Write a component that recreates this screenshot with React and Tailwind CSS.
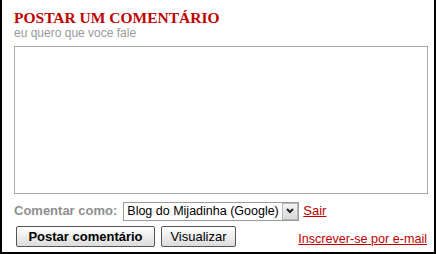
export default function App() {
  return (
    <div className="w-[436px] h-[254px] bg-white border-l-2 border-r-2 border-b-2 border-black pl-3 pr-[6px] pt-[9px] font-['Liberation_Sans',Arial,sans-serif]">
      <h3 className="font-['Liberation_Serif','Times_New_Roman',serif] font-bold text-[15.5px] leading-[17px] text-[#c00000]">
        POSTAR UM COMENTÁRIO
      </h3>
      <p className="text-[12px] leading-[14px] text-[#999999]">eu quero que voce fale</p>
      <textarea className="mt-[6px] block w-[414px] h-[148px] border border-[#a9a9a9] resize-none outline-none" />
      <div className="mt-[7px] flex items-center h-[20px]">
        <span className="text-[13px] text-[#8f8f8f] font-bold mr-[6px]">Comentar como:</span>
        <div className="flex items-center h-[19px] border border-[#9a9a9a] bg-white">
          <span className="pl-[3px] pr-[2px] text-[12.5px] text-black whitespace-nowrap w-[158px]">Blog do Mijadinha (Google)</span>
          <span className="w-[16px] h-[17px] border border-[#b8b8b8] bg-gradient-to-b from-[#f4f4f4] to-[#d8d8d8] flex items-center justify-center">
            <svg width="8" height="6" viewBox="0 0 8 6">
              <path d="M1 1 L4 4 L7 1" stroke="#222" strokeWidth="2" fill="none" />
            </svg>
          </span>
        </div>
        <a className="ml-[4px] text-[13px] text-[#c00000] underline">Sair</a>
      </div>
      <div className="mt-[5px] flex items-start">
        <button className="ml-[2px] h-[21px] w-[139px] border border-[#555] rounded-[2px] bg-gradient-to-b from-white to-[#dcdcdc] text-[13px] font-bold text-black">
          Postar comentário
        </button>
        <button className="ml-[6px] h-[21px] w-[75px] border border-[#555] rounded-[2px] bg-gradient-to-b from-white to-[#dcdcdc] text-[13px] text-black">
          Visualizar
        </button>
        <a className="ml-auto mr-[1px] mt-[6px] text-[12.6px] leading-[15px] text-[#c00000] underline">Inscrever-se por e-mail</a>
      </div>
    </div>
  );
}
